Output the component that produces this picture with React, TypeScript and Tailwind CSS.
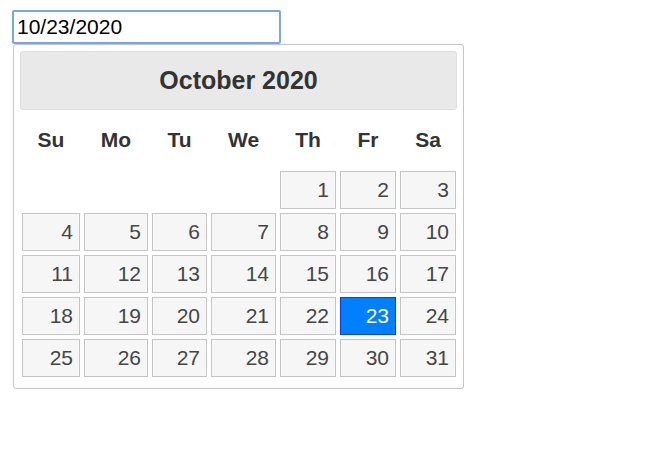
import { useState } from "react"

const dayNames = ["Su", "Mo", "Tu", "We", "Th", "Fr", "Sa"]

// October 2020 starts on a Thursday
const leading = 4
const daysInMonth = 31

export default function App() {
  const [selected, setSelected] = useState<number>(23)

  const cells: (number | null)[] = [
    ...Array.from({ length: leading }, () => null),
    ...Array.from({ length: daysInMonth }, (_, i) => i + 1),
  ]

  return (
    <div className="min-h-screen bg-white pl-[12px] pt-[10px] font-['Liberation_Sans',Arial,sans-serif]">
      <input
        readOnly
        value={`10/${selected}/2020`}
        className="block h-[34px] w-[269px] rounded-[2px] border-2 border-[#78a6ee] pl-[3px] text-[21px] text-black outline-none"
      />
      <div className="ml-[1px] w-[451px] rounded-[3px] border border-[#c5c5c5] px-[6px] pt-[6px] pb-[11px]">
        <div className="flex h-[59px] items-center justify-center rounded-[3px] border border-[#dddddd] bg-[#e9e9e9]">
          <span className="text-[25px] font-bold text-[#333333]">October 2020</span>
        </div>
        <div className="ml-[2px] grid grid-cols-[58px_64px_55px_65px_56px_56px_56px] gap-x-[4px]">
          {dayNames.map((d) => (
            <div key={d} className="flex h-[60px] items-center justify-center text-[21px] font-bold text-[#333333]">
              {d}
            </div>
          ))}
        </div>
        <div className="ml-[2px] mt-[1px] grid grid-cols-[58px_64px_55px_65px_56px_56px_56px] gap-x-[4px] gap-y-[4px]">
          {cells.map((day, i) =>
            day === null ? (
              <div key={`e${i}`} className="h-[38px]" />
            ) : (
              <button
                key={day}
                onClick={() => setSelected(day)}
                className={`flex h-[38px] items-center justify-end border pr-[6px] text-[21px] ${
                  day === selected
                    ? "border-[#003eff] bg-[#007fff] text-white"
                    : "border-[#c5c5c5] bg-[#f6f6f6] text-[#454545]"
                }`}
              >
                {day}
              </button>
            )
          )}
        </div>
      </div>
    </div>
  )
}
